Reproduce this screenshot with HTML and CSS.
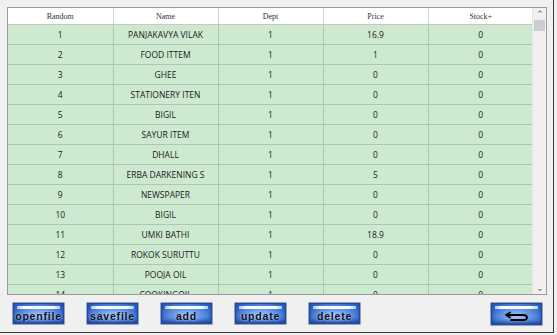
FILE: index.html
```html
<!DOCTYPE html>
<html lang="en">
<head>
  <meta charset="UTF-8" />
  <title>Stock List</title>
  <link rel="stylesheet" href="styles.css">
</head>
<body>
  <div class="window">
    <!-- item grid -->
    <div class="grid-box">
      <div class="grid-scroll">
        <table class="grid">
          <thead>
            <tr>
              <th>Random</th>
              <th>Name</th>
              <th>Dept</th>
              <th>Price</th>
              <th>Stock+</th>
            </tr>
          </thead>
          <tbody>
            <tr><td>1</td><td>PANJAKAVYA VILAK</td><td>1</td><td>16.9</td><td>0</td></tr>
            <tr><td>2</td><td>FOOD ITTEM</td><td>1</td><td>1</td><td>0</td></tr>
            <tr><td>3</td><td>GHEE</td><td>1</td><td>0</td><td>0</td></tr>
            <tr><td>4</td><td>STATIONERY ITEN</td><td>1</td><td>0</td><td>0</td></tr>
            <tr><td>5</td><td>BIGIL</td><td>1</td><td>0</td><td>0</td></tr>
            <tr><td>6</td><td>SAYUR ITEM</td><td>1</td><td>0</td><td>0</td></tr>
            <tr><td>7</td><td>DHALL</td><td>1</td><td>0</td><td>0</td></tr>
            <tr><td>8</td><td>ERBA DARKENING S</td><td>1</td><td>5</td><td>0</td></tr>
            <tr><td>9</td><td>NEWSPAPER</td><td>1</td><td>0</td><td>0</td></tr>
            <tr><td>10</td><td>BIGIL</td><td>1</td><td>0</td><td>0</td></tr>
            <tr><td>11</td><td>UMKI BATHI</td><td>1</td><td>18.9</td><td>0</td></tr>
            <tr><td>12</td><td>ROKOK SURUTTU</td><td>1</td><td>0</td><td>0</td></tr>
            <tr><td>13</td><td>POOJA OIL</td><td>1</td><td>0</td><td>0</td></tr>
            <tr><td>14</td><td>COOKINGOIL</td><td>1</td><td>0</td><td>0</td></tr>
          </tbody>
        </table>
      </div>
      <div class="scrollbar">
        <span class="arrow">&#8963;</span>
        <span class="thumb"></span>
        <span class="track"></span>
        <span class="arrow">&#8964;</span>
      </div>
    </div>

    <!-- toolbar -->
    <div class="toolbar">
      <button class="btn">openfile</button>
      <button class="btn">savefile</button>
      <button class="btn">add</button>
      <button class="btn">update</button>
      <button class="btn">delete</button>
      <button class="btn back-btn">
        <svg width="26" height="12" viewBox="0 0 26 12">
          <path d="M6 2.5 L2 5 L6 7.5 M2 5 H19 Q23 5 23 7.5 Q23 10 19 10 H7" fill="none" stroke="#000" stroke-width="1.8" stroke-linejoin="round" stroke-linecap="round"/>
        </svg>
      </button>
    </div>
  </div>
</body>
</html>
```

FILE: styles.css
```css
body {
  margin: 0;
  background-color: #f0f0f0;
  font-family: 'Open Sans', 'Noto Sans', sans-serif;
}

.window {
  width: 554px;
  height: 333px;
  box-sizing: border-box;
  border-right: 1px solid #3a3a3a;
  border-bottom: 1px solid #3a3a3a;
  padding: 7px 0 0 7px;
}

.grid-box {
  width: 540px;
  height: 288px;
  box-sizing: border-box;
  border: 1px solid #9a9a9a;
  background-color: #fff;
  display: flex;
}

.grid-scroll {
  width: 525px;
  overflow: hidden;
}

.grid {
  width: 525px;
  border-collapse: collapse;
  table-layout: fixed;
}

.grid th {
  height: 16px;
  padding: 0;
  font-family: 'Liberation Serif', serif;
  font-size: 8px;
  font-weight: normal;
  color: #333;
  background-color: #fff;
  border-left: 1px solid #d4d4d4;
  border-bottom: 1px solid #c8c8c8;
}

.grid td {
  height: 19px;
  padding: 0;
  text-align: center;
  font-size: 8.5px;
  color: #1a1a1a;
  background-color: #cde9cf;
  border-left: 1px solid #aacbab;
  border-bottom: 1px solid #aacbab;
}

.grid th:first-child,
.grid td:first-child {
  border-left: none;
}

.scrollbar {
  width: 13px;
  background-color: #f0f0f0;
  border-left: 1px solid #e6e6e6;
  display: flex;
  flex-direction: column;
}

.scrollbar .arrow {
  height: 12px;
  font-size: 9px;
  line-height: 12px;
  text-align: center;
  color: #606060;
}

.scrollbar .thumb {
  height: 11px;
  margin: 0 1px;
  background-color: #cdcdcd;
}

.scrollbar .track {
  flex: 1;
}

.toolbar {
  display: flex;
  gap: 21px;
  padding: 7px 10px 0 5px;
}

.btn {
  width: 53px;
  height: 23px;
  padding: 4px 0 0 0;
  border: 1px solid #9aa4b4;
  border-radius: 1px;
  box-shadow: inset 0 0 0 1px #1f4aa8, inset 0 -3px 4px #1c3f93;
  background:
    linear-gradient(90deg, rgba(255,255,255,0.6), #f4f8ff 15%, #f4f8ff 85%, rgba(255,255,255,0.6)) 4px 3px / calc(100% - 8px) 3px no-repeat,
    radial-gradient(ellipse 60% 80% at 50% 65%, #a9c8f4 0%, #5a8ee0 55%, #2a5bc0 100%);
  font-family: 'Liberation Sans', Arial, sans-serif;
  font-size: 10.5px;
  font-weight: bold;
  letter-spacing: 0.8px;
  color: #0a0f22;
  text-shadow: 0 0 2px #c4dcff;
  white-space: nowrap;
  overflow: hidden;
  cursor: pointer;
}

.back-btn {
  margin-left: auto;
  height: 24px;
  padding-top: 6px;
}
```
